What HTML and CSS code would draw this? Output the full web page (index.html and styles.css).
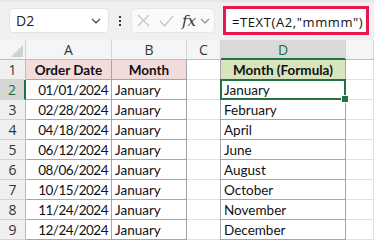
FILE: index.html
```html
<!DOCTYPE html>
<html lang="en">
<head>
    <meta charset="UTF-8">
    <title>Month from date</title>
    <link rel="stylesheet" href="styles.css">
</head>
<body>
    <div class="toolbar">
        <div class="name-box">
            <span>D2</span>
            <svg class="chev" width="10" height="6" viewBox="0 0 10 6"><path d="M1 1l4 4 4-4" fill="none" stroke="#444" stroke-width="1.2"/></svg>
        </div>
        <div class="dots"><i></i><i></i><i></i></div>
        <div class="fx-box">
            <svg width="13" height="13" viewBox="0 0 13 13"><path d="M1 1l11 11M12 1L1 12" stroke="#c4c4c4" stroke-width="1.2"/></svg>
            <svg width="15" height="12" viewBox="0 0 15 12"><path d="M1 6l4.5 5L14 1" fill="none" stroke="#c4c4c4" stroke-width="1.2"/></svg>
            <span class="fx">fx</span>
            <svg class="chev" width="10" height="6" viewBox="0 0 10 6"><path d="M1 1l4 4 4-4" fill="none" stroke="#888" stroke-width="1.1"/></svg>
        </div>
        <div class="formula">=TEXT(A2,"mmmm")</div>
    </div>

    <div class="sheet">
        <div class="hd corner"><span class="tri"></span></div>
        <div class="hd">A</div>
        <div class="hd">B</div>
        <div class="hd">C</div>
        <div class="hd col-sel">D</div>
        <div class="hd"></div>

        <div class="rh">1</div>
        <div class="c t head pink">Order Date</div>
        <div class="c t head pink">Month</div>
        <div class="c"></div>
        <div class="c t d head green">Month (Formula)</div>
        <div class="c"></div>

        <div class="rh row-sel">2</div>
        <div class="c t num">01/01/2024</div>
        <div class="c t">January</div>
        <div class="c"></div>
        <div class="c t d active">January</div>
        <div class="c"></div>

        <div class="rh">3</div>
        <div class="c t num">02/28/2024</div>
        <div class="c t">January</div>
        <div class="c"></div>
        <div class="c t d">February</div>
        <div class="c"></div>

        <div class="rh">4</div>
        <div class="c t num">04/18/2024</div>
        <div class="c t">January</div>
        <div class="c"></div>
        <div class="c t d">April</div>
        <div class="c"></div>

        <div class="rh">5</div>
        <div class="c t num">06/12/2024</div>
        <div class="c t">January</div>
        <div class="c"></div>
        <div class="c t d">June</div>
        <div class="c"></div>

        <div class="rh">6</div>
        <div class="c t num">08/06/2024</div>
        <div class="c t">January</div>
        <div class="c"></div>
        <div class="c t d">August</div>
        <div class="c"></div>

        <div class="rh">7</div>
        <div class="c t num">10/15/2024</div>
        <div class="c t">January</div>
        <div class="c"></div>
        <div class="c t d">October</div>
        <div class="c"></div>

        <div class="rh">8</div>
        <div class="c t num">11/24/2024</div>
        <div class="c t">January</div>
        <div class="c"></div>
        <div class="c t d">November</div>
        <div class="c"></div>

        <div class="rh">9</div>
        <div class="c t num">12/24/2024</div>
        <div class="c t">January</div>
        <div class="c"></div>
        <div class="c t d">December</div>
        <div class="c"></div>
    </div>
</body>
</html>
```

FILE: styles.css
```css
* {
    box-sizing: border-box;
}

body {
    margin: 0;
    width: 374px;
    height: 242px;
    overflow: hidden;
    background: #fff;
    font-family: 'Lato', sans-serif;
}

/* formula toolbar */
.toolbar {
    height: 40px;
    background: #f0f0f0;
    border-top: 2px solid #e6e6e6;
    display: flex;
    align-items: flex-start;
    padding: 6px 0 0 9px;
}

.name-box {
    width: 100px;
    height: 25px;
    background: #fff;
    border: 1px solid #e3e3e3;
    border-radius: 4px;
    display: flex;
    align-items: center;
    justify-content: space-between;
    padding: 0 7px 0 6px;
    font-family: 'Open Sans', sans-serif;
    font-size: 14px;
    color: #222;
}

.dots {
    width: 22px;
    height: 25px;
    display: flex;
    flex-direction: column;
    align-items: center;
    justify-content: center;
    gap: 2px;
}

.dots i {
    width: 2px;
    height: 2px;
    background: #333;
}

.fx-box {
    width: 84px;
    height: 25px;
    background: #fafafa;
    border: 1px solid #e6e6e6;
    border-radius: 4px;
    display: flex;
    align-items: center;
    gap: 9px;
    padding-left: 5px;
}

.fx {
    font-family: 'DejaVu Serif', serif;
    font-style: italic;
    font-size: 15px;
    color: #333;
    margin-left: -1px;
    margin-right: -5px;
}

.formula {
    width: 146px;
    height: 29px;
    margin: -2px 0 0 8px;
    background: #fff;
    border: 3px solid #e5194e;
    font-family: 'Open Sans', sans-serif;
    font-size: 13px;
    letter-spacing: 0.6px;
    color: #111;
    padding: 4px 0 0 6px;
    white-space: nowrap;
}

/* grid */
.sheet {
    display: grid;
    grid-template-columns: 26px 86px 75px 34px 125px 1fr;
    grid-auto-rows: 20px;
    font-size: 13.5px;
    color: #111;
}

.hd {
    background: #f5f5f5;
    border-right: 1px solid #d4d4d4;
    border-bottom: 1px solid #bdbdbd;
    font-family: 'Open Sans', sans-serif;
    font-size: 14px;
    color: #333;
    display: flex;
    align-items: center;
    justify-content: center;
}

.corner {
    position: relative;
}

.tri {
    position: absolute;
    right: 2px;
    bottom: 2px;
    width: 0;
    height: 0;
    border-left: 12px solid transparent;
    border-bottom: 12px solid #d0d0d0;
}

.col-sel {
    background: #d9d9d9;
    border-bottom: 2px solid #217346;
    color: #1e6b40;
}

.rh {
    background: #f0f0f0;
    border-right: 1px solid #bdbdbd;
    border-bottom: 1px solid #d4d4d4;
    font-family: 'Open Sans', sans-serif;
    font-size: 14px;
    color: #333;
    display: flex;
    align-items: center;
    justify-content: center;
}

.row-sel {
    background: #d6d6d6;
    border-right: 2px solid #217346;
    color: #1e6b40;
}

.c {
    border-right: 1px solid #e1e1e1;
    border-bottom: 1px solid #e1e1e1;
    display: flex;
    align-items: flex-end;
    padding: 0 3px 1px 3px;
    white-space: nowrap;
}

.c.t {
    border-right-color: #a6a6a6;
    border-bottom-color: #a6a6a6;
}

.c.d {
    box-shadow: -1px 0 0 #a6a6a6;
}

.head {
    font-weight: bold;
    justify-content: center;
}

.pink {
    background: #f2dcdb;
}

.green {
    background: #d8e4bc;
}

.num {
    justify-content: flex-end;
    letter-spacing: -0.5px;
}

.active {
    position: relative;
}

.active::before {
    content: "";
    position: absolute;
    left: -1px;
    top: -1px;
    right: -1px;
    bottom: -1px;
    border: 2px solid #217346;
}

.active::after {
    content: "";
    position: absolute;
    right: -4px;
    bottom: -4px;
    width: 6px;
    height: 6px;
    background: #217346;
    border: 1px solid #fff;
}
```
